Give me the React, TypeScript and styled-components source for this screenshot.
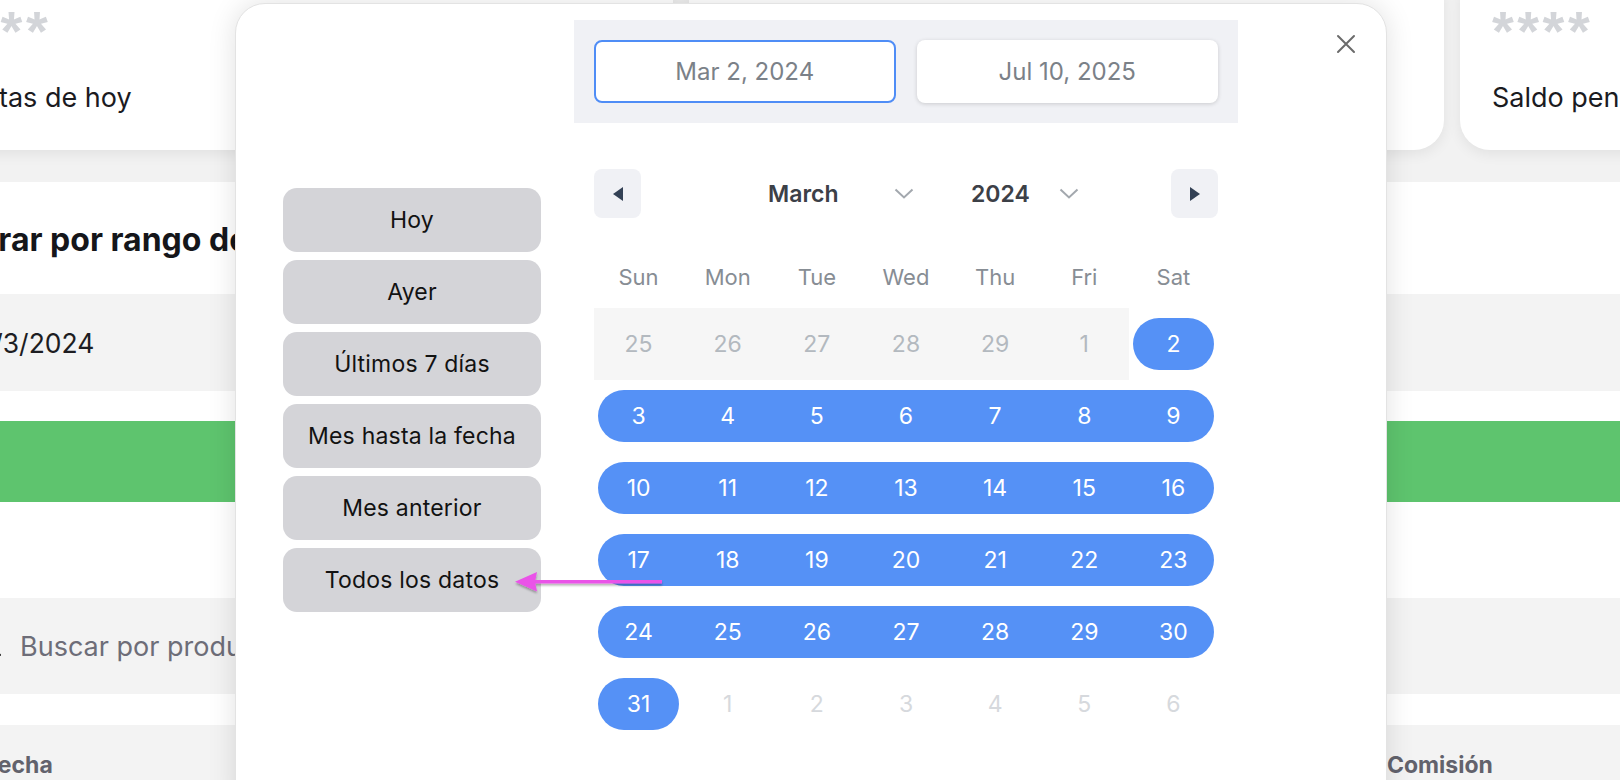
import React from "react";
import styled, { createGlobalStyle, css } from "styled-components";
import { Search } from "lucide-react";

const Global = createGlobalStyle`
  html, body {
    margin: 0;
    padding: 0;
    width: 1620px;
    height: 780px;
    overflow: hidden;
    background: #f2f2f2;
    font-family: Inter, "Liberation Sans", Arial, sans-serif;
  }
  #root {
    position: relative;
    width: 1620px;
    height: 780px;
    overflow: hidden;
  }
  * { box-sizing: border-box; }
`;

/* ---------- background page ---------- */

const Page = styled.div`
  width: 1760px;
  margin-left: -60px;
  display: flex;
  flex-direction: column;
`;

const CardsRow = styled.div`
  display: grid;
  grid-template-columns: repeat(3, 755px);
  gap: 16px;
  margin: -30px 0 0 -22px;
`;

const StatCard = styled.div`
  height: 180px;
  background: #fff;
  border-radius: 30px;
  box-shadow: 0 4px 14px rgba(0, 0, 0, 0.07);
  padding: 38px 32px 0;
  display: flex;
  flex-direction: column;
  gap: 33px;
`;

const Masked = styled.div`
  font-family: "Liberation Sans", Arial, sans-serif;
  font-weight: 700;
  font-size: 56px;
  line-height: 46px;
  height: 40px;
  letter-spacing: 3.5px;
  color: #d3d5d9;
`;

const StatLabel = styled.div`
  font-size: 27px;
  line-height: 34px;
  color: #1b1b1f;
`;

const Panel = styled.div`
  margin-top: 32px;
  height: 640px;
  background: #fff;
  display: flex;
  flex-direction: column;
  padding-top: 40px;
`;

const Title = styled.h2`
  margin: 0;
  padding-left: 10px;
  font-size: 32px;
  line-height: 36px;
  font-weight: 700;
  color: #15161a;
`;

const DateRow = styled.div`
  margin-top: 36px;
  height: 97px;
  background: #f3f3f3;
  display: flex;
  align-items: center;
  padding-left: 37px;
  font-size: 26.5px;
  color: #1d1d22;
`;

const GreenBar = styled.div`
  margin-top: 30px;
  height: 81px;
  background: #5ec46e;
`;

const SearchRow = styled.div`
  margin-top: 96px;
  height: 96px;
  background: #f3f3f3;
  display: flex;
  align-items: center;
  gap: 17px;
  padding-left: 39px;
  font-size: 27px;
  color: #6d6d78;
  svg { color: #222; flex: none; }
`;

const TableHead = styled.div`
  margin-top: 31px;
  height: 80px;
  background: #f3f3f3;
  display: grid;
  grid-template-columns: 1447px 1fr;
  align-items: center;
`;

const HeadCell = styled.div<{ $pad?: number }>`
  padding-left: ${(p) => p.$pad ?? 0}px;
  font-size: 23px;
  font-weight: 700;
  color: #62626c;
`;

/* ---------- modal ---------- */

const Modal = styled.div`
  position: absolute;
  left: 235px;
  top: 3px;
  width: 1152px;
  height: 820px;
  background: #fff;
  border: 1px solid #e3e3e3;
  border-radius: 30px;
  box-shadow: 0 0 28px rgba(0, 0, 0, 0.12);
  display: flex;
  gap: 33px;
  padding: 16px 0 0 47px;
`;

const CloseButton = styled.button`
  position: absolute;
  top: 28px;
  right: 28px;
  width: 24px;
  height: 24px;
  padding: 0;
  border: none;
  background: transparent;
  display: flex;
  align-items: center;
  justify-content: center;
`;

const PresetList = styled.div`
  margin-top: 168px;
  width: 258px;
  display: flex;
  flex-direction: column;
  gap: 8px;
`;

const PresetButton = styled.button`
  height: 64px;
  border: none;
  border-radius: 14px;
  background: #d4d4d8;
  font-family: Inter, "Liberation Sans", Arial, sans-serif;
  font-size: 23px;
  color: #121212;
  letter-spacing: 0.2px;
`;

const CalendarCol = styled.div`
  width: 664px;
  display: flex;
  flex-direction: column;
`;

const DateBar = styled.div`
  background: #f0f1f5;
  padding: 20px;
  display: grid;
  grid-template-columns: 1fr 1fr;
  gap: 21px;
`;

const DateInput = styled.div<{ $active?: boolean }>`
  height: 63px;
  border-radius: 8px;
  background: #fff;
  display: flex;
  align-items: center;
  justify-content: center;
  font-size: 24px;
  color: #7b8188;
  ${(p) =>
    p.$active
      ? css`
          border: 2px solid #4f8df6;
        `
      : css`
          box-shadow: 0 1px 4px rgba(0, 0, 0, 0.16);
        `}
`;

const NavRow = styled.div`
  margin-top: 46px;
  padding: 0 20px;
  height: 49px;
  display: flex;
  align-items: center;
`;

const NavButton = styled.button`
  width: 47px;
  height: 49px;
  border: none;
  border-radius: 8px;
  background: #f0f1f5;
  display: flex;
  align-items: center;
  justify-content: center;
  padding: 0;
`;

const SelectGroup = styled.div`
  margin-left: 127px;
  display: flex;
  gap: 57px;
`;

const SelectLike = styled.div<{ $w: number }>`
  width: ${(p) => p.$w}px;
  display: flex;
  align-items: center;
  justify-content: space-between;
  font-size: 23px;
  font-weight: 600;
  color: #3c4047;
`;

const NextWrap = styled.div`
  margin-left: auto;
`;

const WeekHead = styled.div`
  margin-top: 38px;
  padding: 0 20px;
  height: 42px;
  display: grid;
  grid-template-columns: repeat(7, 1fr);
  align-items: center;
  text-align: center;
  font-size: 22px;
  color: #878d94;
`;

const Weeks = styled.div`
  margin-top: 10px;
  padding: 0 20px;
  display: flex;
  flex-direction: column;
`;

const WeekRow = styled.div`
  display: grid;
  grid-template-columns: repeat(7, 1fr);
  height: 72px;
`;

type Kind = "disabled" | "sel" | "next";

const DayCell = styled.div<{ $kind: Kind; $start?: boolean; $end?: boolean }>`
  position: relative;
  display: flex;
  align-items: center;
  justify-content: center;
  font-size: 23px;
  color: ${(p) =>
    p.$kind === "sel" ? "#ffffff" : p.$kind === "disabled" ? "#b3b9bf" : "#d6d9dd"};
  background: ${(p) => (p.$kind === "disabled" ? "#f6f6f6" : "transparent")};
  span { position: relative; }
  ${(p) =>
    p.$kind === "sel" &&
    css`
      &::before {
        content: "";
        position: absolute;
        top: 10px;
        bottom: 10px;
        left: ${p.$start ? 4 : 0}px;
        right: ${p.$end ? 4 : 0}px;
        background: #5591f6;
        border-top-left-radius: ${p.$start ? 26 : 0}px;
        border-bottom-left-radius: ${p.$start ? 26 : 0}px;
        border-top-right-radius: ${p.$end ? 26 : 0}px;
        border-bottom-right-radius: ${p.$end ? 26 : 0}px;
      }
    `}
`;

const Arrow = styled.svg`
  position: absolute;
  left: 510px;
  top: 568px;
  overflow: visible;
`;

type Day = { n: number; kind: Kind };

const weeks: Day[][] = [
  [
    { n: 25, kind: "disabled" },
    { n: 26, kind: "disabled" },
    { n: 27, kind: "disabled" },
    { n: 28, kind: "disabled" },
    { n: 29, kind: "disabled" },
    { n: 1, kind: "disabled" },
    { n: 2, kind: "sel" },
  ],
  [3, 4, 5, 6, 7, 8, 9].map((n) => ({ n, kind: "sel" as Kind })),
  [10, 11, 12, 13, 14, 15, 16].map((n) => ({ n, kind: "sel" as Kind })),
  [17, 18, 19, 20, 21, 22, 23].map((n) => ({ n, kind: "sel" as Kind })),
  [24, 25, 26, 27, 28, 29, 30].map((n) => ({ n, kind: "sel" as Kind })),
  [
    { n: 31, kind: "sel" },
    { n: 1, kind: "next" },
    { n: 2, kind: "next" },
    { n: 3, kind: "next" },
    { n: 4, kind: "next" },
    { n: 5, kind: "next" },
    { n: 6, kind: "next" },
  ],
];

const presets = [
  "Hoy",
  "Ayer",
  "Últimos 7 días",
  "Mes hasta la fecha",
  "Mes anterior",
  "Todos los datos",
];

const Chevron = () => (
  <svg width="20" height="11" viewBox="0 0 20 11">
    <path d="M1.5 1.5 L10 9.5 L18.5 1.5" fill="none" stroke="#a3a8ae" strokeWidth="2" />
  </svg>
);

const Tri = ({ dir }: { dir: "l" | "r" }) => (
  <svg width="12" height="16" viewBox="0 0 12 16">
    <path d={dir === "l" ? "M11 1 L1 8 L11 15 Z" : "M1 1 L11 8 L1 15 Z"} fill="#334155" />
  </svg>
);

export default function App() {
  return (
    <>
      <Global />
      <Page>
        <CardsRow>
          <StatCard>
            <Masked>****</Masked>
            <StatLabel>Ventas de hoy</StatLabel>
          </StatCard>
          <StatCard>
            <Masked>****</Masked>
            <StatLabel>Ventas del mes</StatLabel>
          </StatCard>
          <StatCard>
            <Masked>****</Masked>
            <StatLabel>Saldo pendiente</StatLabel>
          </StatCard>
        </CardsRow>
        <Panel>
          <Title>Filtrar por rango de fechas</Title>
          <DateRow>2/3/2024</DateRow>
          <GreenBar />
          <SearchRow>
            <Search size={24} strokeWidth={2} />
            <span>Buscar por producto o cliente</span>
          </SearchRow>
          <TableHead>
            <HeadCell $pad={45}>Fecha</HeadCell>
            <HeadCell>Comisión</HeadCell>
          </TableHead>
        </Panel>
      </Page>

      <Modal>
        <CloseButton aria-label="Cerrar">
          <svg width="22" height="22" viewBox="0 0 22 22">
            <path d="M3 3 L19 19 M19 3 L3 19" stroke="#6b6b6b" strokeWidth="2" strokeLinecap="round" />
          </svg>
        </CloseButton>
        <PresetList>
          {presets.map((p) => (
            <PresetButton key={p}>{p}</PresetButton>
          ))}
        </PresetList>
        <CalendarCol>
          <DateBar>
            <DateInput $active>Mar 2, 2024</DateInput>
            <DateInput>Jul 10, 2025</DateInput>
          </DateBar>
          <NavRow>
            <NavButton aria-label="Anterior">
              <Tri dir="l" />
            </NavButton>
            <SelectGroup>
              <SelectLike $w={146}>
                March
                <Chevron />
              </SelectLike>
              <SelectLike $w={108}>
                2024
                <Chevron />
              </SelectLike>
            </SelectGroup>
            <NextWrap>
              <NavButton aria-label="Siguiente">
                <Tri dir="r" />
              </NavButton>
            </NextWrap>
          </NavRow>
          <WeekHead>
            {["Sun", "Mon", "Tue", "Wed", "Thu", "Fri", "Sat"].map((d) => (
              <div key={d}>{d}</div>
            ))}
          </WeekHead>
          <Weeks>
            {weeks.map((w, wi) => (
              <WeekRow key={wi}>
                {w.map((d, di) => {
                  const prevSel = di > 0 && w[di - 1].kind === "sel";
                  const nextSel = di < 6 && w[di + 1].kind === "sel";
                  return (
                    <DayCell
                      key={di}
                      $kind={d.kind}
                      $start={d.kind === "sel" && !prevSel}
                      $end={d.kind === "sel" && !nextSel}
                    >
                      <span>{d.n}</span>
                    </DayCell>
                  );
                })}
              </WeekRow>
            ))}
          </Weeks>
        </CalendarCol>
      </Modal>

      <Arrow width="156" height="28" viewBox="0 0 156 28">
        <defs>
          <filter id="sh" x="-10%" y="-50%" width="120%" height="200%">
            <feDropShadow dx="0" dy="2" stdDeviation="1.2" floodColor="#000" floodOpacity="0.3" />
          </filter>
        </defs>
        <g filter="url(#sh)">
          <path d="M22 12 L152 12 L152 15.5 L22 15.5 Z" fill="#ea52e8" />
          <path d="M5 13.7 L27 4 L25 13.7 L27 23.5 Z" fill="#ea52e8" />
        </g>
      </Arrow>
    </>
  );
}
